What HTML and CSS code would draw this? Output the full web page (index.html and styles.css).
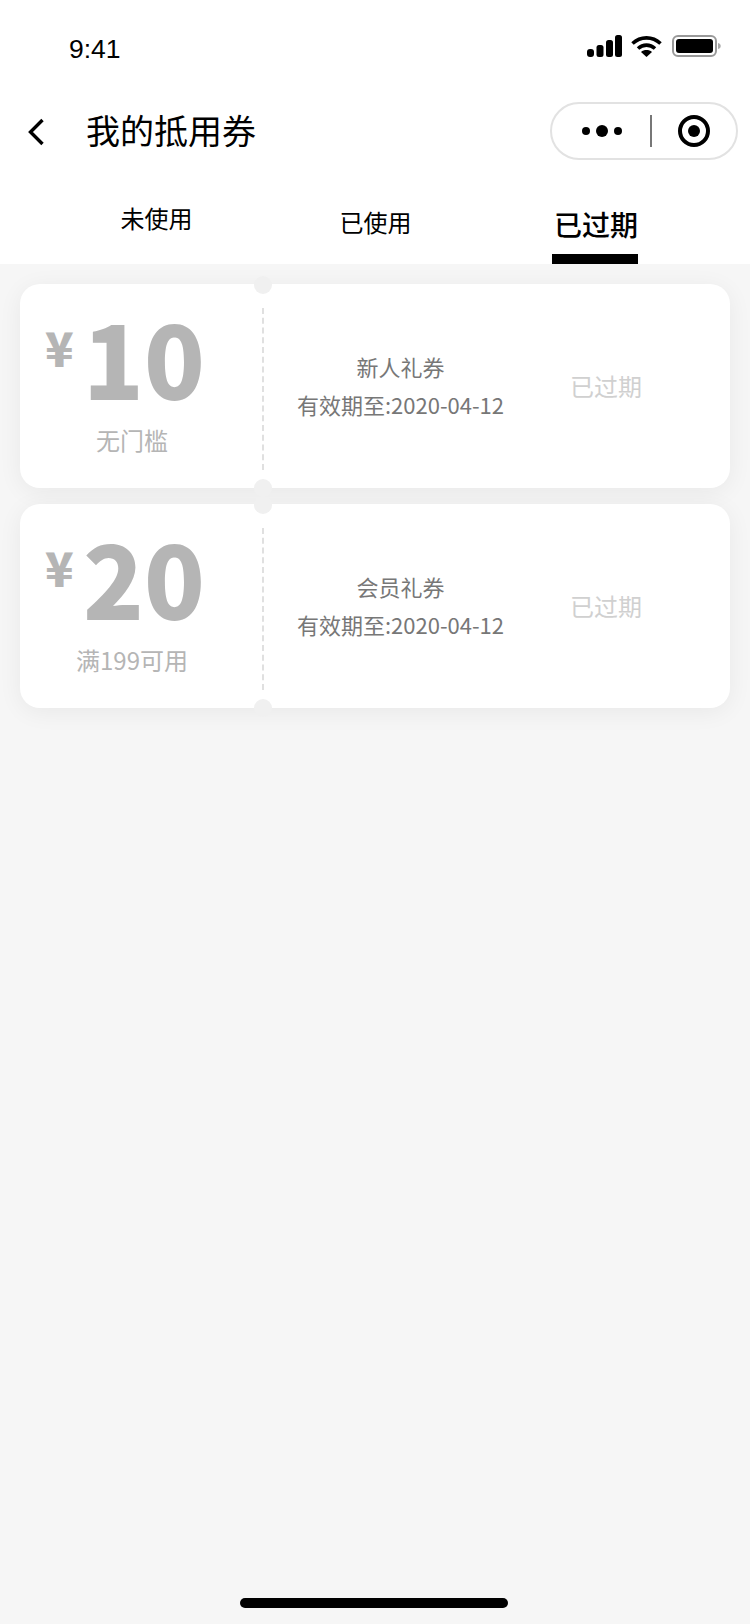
FILE: index.html
```html
<!DOCTYPE html>
<html lang="zh-CN">
<head>
<meta charset="UTF-8">
<meta name="viewport" content="width=device-width, initial-scale=1.0">
<title>我的抵用券</title>
<link rel="stylesheet" href="styles.css">
</head>
<body>

<div class="page">
    <div class="header">
        <div class="statusbar">
            <span class="time">9:41</span>
            <div class="status-icons">
                <svg width="35" height="22" viewBox="0 0 35 22">
                    <rect x="0" y="14" width="7" height="8" rx="3" fill="#000"/>
                    <rect x="9.5" y="10" width="7" height="12" rx="2.5" fill="#000"/>
                    <rect x="19" y="5" width="7" height="17" rx="2.5" fill="#000"/>
                    <rect x="28" y="0" width="7" height="22" rx="2.5" fill="#000"/>
                </svg>
                <svg width="31" height="22" viewBox="0 0 31 22">
                    <path d="M1.5 8.5 C9.5 1 21.5 1 29.5 8.5" fill="none" stroke="#000" stroke-width="3.6"/>
                    <path d="M7 13.5 C12 9 19 9 24 13.5" fill="none" stroke="#000" stroke-width="3.6"/>
                    <path d="M15.5 22 L10 17 C13 14.4 18 14.4 21 17 Z" fill="#000"/>
                </svg>
                <svg class="battery" width="49" height="22" viewBox="0 0 49 22">
                    <rect x="1" y="1" width="43" height="20" rx="5" fill="none" stroke="#999" stroke-width="2"/>
                    <rect x="4" y="4" width="37" height="14" rx="3" fill="#000"/>
                    <path d="M46 8 C48 8.5 48.7 9.5 48.7 11 C48.7 12.5 48 13.5 46 14 Z" fill="#aaa"/>
                </svg>
            </div>
        </div>

        <div class="navbar">
            <svg class="back" width="20" height="30" viewBox="0 0 20 30">
                <path d="M17.5 3 L5.5 15 L17.5 27" fill="none" stroke="#000" stroke-width="3.4"/>
            </svg>
            <span class="title">我的抵用券</span>
            <div class="capsule">
                <div class="dots">
                    <i class="dot"></i>
                    <i class="dot big"></i>
                    <i class="dot"></i>
                </div>
                <i class="capsule-line"></i>
                <div class="target"><i></i></div>
            </div>
        </div>

        <div class="tabs">
            <a href="#" class="tab tab-unused">未使用</a>
            <a href="#" class="tab tab-used">已使用</a>
            <a href="#" class="tab active">已过期</a>
        </div>
    </div>

    <div class="list">
        <div class="coupon">
            <div class="coupon-left">
                <div class="amount"><span class="yen">¥</span><span class="num">10</span></div>
                <div class="limit">无门槛</div>
            </div>
            <div class="coupon-info">
                <div>新人礼券</div>
                <div>有效期至:2020-04-12</div>
            </div>
            <div class="coupon-state">已过期</div>
        </div>
        <div class="coupon">
            <div class="coupon-left">
                <div class="amount"><span class="yen">¥</span><span class="num">20</span></div>
                <div class="limit">满199可用</div>
            </div>
            <div class="coupon-info">
                <div>会员礼券</div>
                <div>有效期至:2020-04-12</div>
            </div>
            <div class="coupon-state">已过期</div>
        </div>
    </div>

    <div class="home-bar"><i></i></div>
</div>

</body>
</html>
```

FILE: styles.css
```css
* {
    box-sizing: border-box;
}

body {
    margin: 0;
    background: #f6f6f6;
    font-family: "Noto Sans CJK SC", "Noto Sans", sans-serif;
    color: #000;
}

.page {
    height: 1624px;
    display: flex;
    flex-direction: column;
    overflow: hidden;
}

.header {
    background: #fff;
    height: 264px;
}

.statusbar {
    height: 92px;
    padding: 35px 29px 0 69px;
    display: flex;
    justify-content: space-between;
    align-items: flex-start;
}

.time {
    font-family: "Liberation Sans", Arial, sans-serif;
    font-size: 26.5px;
    line-height: 28px;
}

.status-icons {
    display: flex;
    gap: 9px;
}

.status-icons svg {
    display: block;
}

.status-icons .battery {
    margin-left: 1px;
}

.navbar {
    height: 76px;
    padding: 2px 12px 0 25px;
    display: flex;
    align-items: center;
}

.back {
    display: block;
    margin-top: 1px;
}

.title {
    font-size: 34px;
    line-height: 50px;
    margin-top: -2px;
    margin-left: 41px;
    flex: 1;
}

.capsule {
    width: 188px;
    height: 58px;
    border: 2px solid #e2e2e2;
    border-radius: 29px;
    background: #fff;
    display: flex;
    align-items: center;
    padding-left: 30px;
}

.dots {
    display: flex;
    align-items: center;
    gap: 6px;
}

.dot {
    width: 8px;
    height: 8px;
    border-radius: 50%;
    background: #000;
}

.dot.big {
    width: 12px;
    height: 12px;
}

.capsule-line {
    width: 2px;
    height: 32px;
    background: #777;
    margin-left: 28px;
}

.target {
    width: 32px;
    height: 32px;
    border: 4px solid #000;
    border-radius: 50%;
    margin-left: 26px;
    display: flex;
    align-items: center;
    justify-content: center;
}

.target i {
    width: 12px;
    height: 12px;
    border-radius: 50%;
    background: #000;
}

.tabs {
    height: 96px;
    padding-left: 45px;
    display: flex;
}

.tab {
    width: 221px;
    text-align: center;
    text-decoration: none;
    color: #000;
    font-size: 24px;
    line-height: 34px;
}

.tab-unused {
    padding-top: 33px;
    padding-left: 2px;
}

.tab-used {
    padding-top: 37px;
    padding-right: 2px;
}

.tab.active {
    width: 86px;
    height: 96px;
    margin-left: 65px;
    padding-top: 36px;
    padding-left: 2px;
    font-size: 28px;
    line-height: 40px;
    font-weight: 500;
    white-space: nowrap;
    border-bottom: 10px solid #000;
}

.list {
    flex: 1;
    padding: 20px 20px 0;
    display: flex;
    flex-direction: column;
    gap: 16px;
}

.coupon {
    height: 204px;
    background: #fff;
    border-radius: 20px;
    box-shadow: 0 4px 24px rgba(0, 0, 0, 0.06);
    display: flex;
}

.coupon-left {
    width: 242px;
    position: relative;
    padding-left: 25px;
}

/* notches sit over the card edge */
.coupon-left:before,
.coupon-left:after {
    content: "";
    position: absolute;
    right: -10px;
    width: 18px;
    height: 18px;
    border-radius: 50%;
    background: #f0f0f0;
}

.coupon-left:before {
    top: -8px;
}

.coupon-left:after {
    bottom: -9px;
}

.amount {
    display: flex;
    align-items: flex-start;
    height: 139px;
}

.yen {
    width: 29px;
    font-size: 47px;
    line-height: 48px;
    font-weight: 900;
    color: #b5b5b5;
    margin-top: 39px;
}

.num {
    font-size: 100px;
    line-height: 110px;
    font-weight: 900;
    color: #b5b5b5;
    margin-top: 18px;
    margin-left: 9px;
}

.limit {
    padding-right: 43px;
    text-align: center;
    font-size: 24px;
    line-height: 34px;
    color: #b5b5b5;
}

.coupon-info {
    width: 275px;
    margin-top: 24px;
    margin-bottom: 18px;
    border-left: 2px dashed #e0e0e0;
    padding-top: 39px;
    text-align: center;
    font-size: 22px;
    line-height: 38px;
    color: #777;
}

.coupon-state {
    flex: 1;
    padding-top: 85px;
    padding-right: 55px;
    font-size: 24px;
    line-height: 34px;
    color: #d0d0d0;
    text-align: center;
}

.home-bar {
    height: 26px;
    padding-right: 2px;
    display: flex;
    justify-content: center;
}

.home-bar i {
    width: 268px;
    height: 10px;
    border-radius: 5px;
    background: #000;
}
```
